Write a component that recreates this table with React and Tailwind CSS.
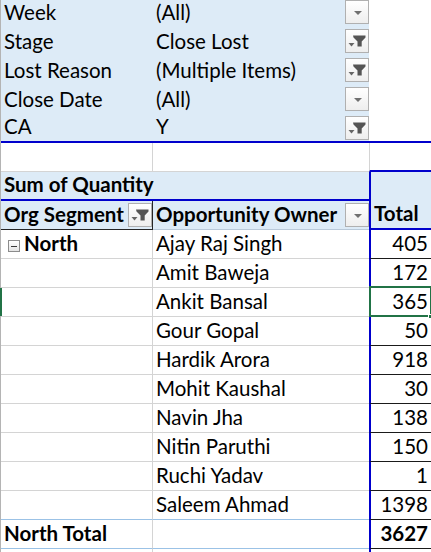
import React from 'react';

const filters = [
    ['Week', '(All)', false],
    ['Stage', 'Close Lost', true],
    ['Lost Reason', '(Multiple Items)', true],
    ['Close Date', '(All)', false],
    ['CA', 'Y', true],
];

const owners = [
    ['Ajay Raj Singh', 405],
    ['Amit Baweja', 172],
    ['Ankit Bansal', 365],
    ['Gour Gopal', 50],
    ['Hardik Arora', 918],
    ['Mohit Kaushal', 30],
    ['Navin Jha', 138],
    ['Nitin Paruthi', 150],
    ['Ruchi Yadav', 1],
    ['Saleem Ahmad', 1398],
];

const DropButton = ({ filter }) => (
    <div className="w-[24px] h-[24px] shrink-0 border border-[#b0b0b0] bg-gradient-to-b from-white to-[#eeeeee]">
        <svg width="22" height="22" viewBox="0 0 22 22">
            {filter ? (
                <>
                    <path d="M7 5.5h12.5v2l-3.8 4V16.5h-4.2v-5L7.5 7.5z" fill="#555555" />
                    <path d="M2.5 13h6l-3 3.5z" fill="#666666" />
                </>
            ) : (
                <path d="M8 10h8l-4 4z" fill="#707070" />
            )}
        </svg>
    </div>
);

const Text = ({ children, className = '' }) => (
    <span className={`leading-none pb-[5px] whitespace-nowrap ${className}`}>{children}</span>
);

export default function App() {
    return (
        <div className="w-[431px] h-[552px] overflow-hidden bg-white text-black font-['Lato','Liberation_Sans',sans-serif] text-[20.5px]">
            <div className="-mt-[2px] border-l border-[#b4b4b4]">
                {/* Report filters */}
                {filters.map(([label, value, filtered], i) => (
                    <div
                        key={label}
                        className={`flex h-[29px] ${i === filters.length - 1 ? 'border-b-2 border-[#0000cc]' : ''}`}
                    >
                        <div className="w-[152px] bg-[#ddebf7] flex items-end pl-[3px]">
                            <Text>{label}</Text>
                        </div>
                        <div className="w-[216px] bg-[#ddebf7] flex justify-between pl-[3px]">
                            <Text className="self-end">{value}</Text>
                            <div className="mt-[2px]">
                                <DropButton filter={filtered} />
                            </div>
                        </div>
                        <div className="flex-1" />
                    </div>
                ))}

                {/* Blank row */}
                <div className="flex h-[29px]">
                    <div className="w-[152px] border-r border-b border-[#d4d4d4]" />
                    <div className="w-[216px] border-b border-[#d4d4d4]" />
                    <div className="flex-1 border-l border-l-[#d4d4d4] border-b-2 border-b-[#0000cc]" />
                </div>

                {/* Values header */}
                <div className="flex h-[29px]">
                    <div className="w-[368px] bg-[#ddebf7] border-b-2 border-[#0000cc] flex items-end pl-[3px]">
                        <Text className="font-bold">Sum of Quantity</Text>
                    </div>
                    <div className="flex-1 bg-[#ddebf7] border-l-2 border-[#0000cc]" />
                </div>

                {/* Field header */}
                <div className="flex h-[29px]">
                    <div className="w-[152px] bg-[#ddebf7] border-r border-b border-[#262626] flex justify-between pl-[3px]">
                        <Text className="font-bold self-end">Org Segment</Text>
                        <div className="mt-[2px]">
                            <DropButton filter />
                        </div>
                    </div>
                    <div className="w-[216px] bg-[#ddebf7] border-b border-[#b9c9d9] flex justify-between pl-[3px]">
                        <Text className="font-bold self-end">Opportunity Owner</Text>
                        <div className="mt-[2px]">
                            <DropButton />
                        </div>
                    </div>
                    <div className="flex-1 bg-[#ddebf7] border-l-2 border-b-2 border-[#0000cc] flex items-end pl-[3px]">
                        <Text className="font-bold">Total</Text>
                    </div>
                </div>

                {/* Rows */}
                {owners.map(([name, qty], i) => {
                    const last = i === owners.length - 1;
                    const selected = name === 'Ankit Bansal';
                    return (
                        <div key={name} className="relative flex h-[29px]">
                            {selected && <div className="absolute -left-px top-0 w-[2px] h-[28px] bg-[#217346]" />}
                            <div
                                className={`w-[152px] border-r border-r-[#d4d4d4] border-b flex items-end ${
                                    last ? 'border-b-[#9bc2e6]' : 'border-b-[#d4d4d4]'
                                }`}
                            >
                                {i === 0 && (
                                    <div className="flex items-end h-full">
                                        <div className="ml-[7px] mb-[6px] w-[12px] h-[12px] border border-[#8c8c8c] bg-gradient-to-b from-white to-[#e4e4e4] flex items-center justify-center">
                                            <div className="w-[6px] h-[1px] bg-[#3a3a3a]" />
                                        </div>
                                        <Text className="font-bold ml-[4px]">North</Text>
                                    </div>
                                )}
                            </div>
                            <div
                                className={`w-[216px] border-b flex items-end pl-[3px] ${
                                    last ? 'border-b-[#9bc2e6]' : 'border-b-[#d4d4d4]'
                                }`}
                            >
                                <Text>{name}</Text>
                            </div>
                            <div className="relative flex-1 border-l-2 border-l-[#0000cc] border-b border-b-[#1a1a1a] flex items-end justify-end pr-[3px]">
                                <Text>{qty}</Text>
                                {selected && (
                                    <>
                                        <div className="absolute -left-[2px] -top-[2px] -right-[1px] -bottom-[1px] border-2 border-[#217346]" />
                                        <div className="absolute -right-[2px] -bottom-[3px] w-[5px] h-[5px] bg-[#217346] border border-white" />
                                    </>
                                )}
                            </div>
                        </div>
                    );
                })}

                {/* Total row */}
                <div className="flex h-[29px]">
                    <div className="w-[152px] border-r border-r-[#d4d4d4] border-b border-b-[#9bc2e6] flex items-end pl-[3px]">
                        <Text className="font-bold">North Total</Text>
                    </div>
                    <div className="w-[216px] border-b border-b-[#9bc2e6]" />
                    <div className="flex-1 border-l-2 border-l-[#0000cc] border-b border-b-[#1a1a1a] flex items-end justify-end pr-[3px]">
                        <Text className="font-bold">3627</Text>
                    </div>
                </div>

                {/* Partial row */}
                <div className="flex h-[29px]">
                    <div className="w-[152px] border-r border-[#d4d4d4]" />
                    <div className="w-[216px]" />
                    <div className="flex-1 border-l-2 border-[#0000cc]" />
                </div>
            </div>
        </div>
    );
}
